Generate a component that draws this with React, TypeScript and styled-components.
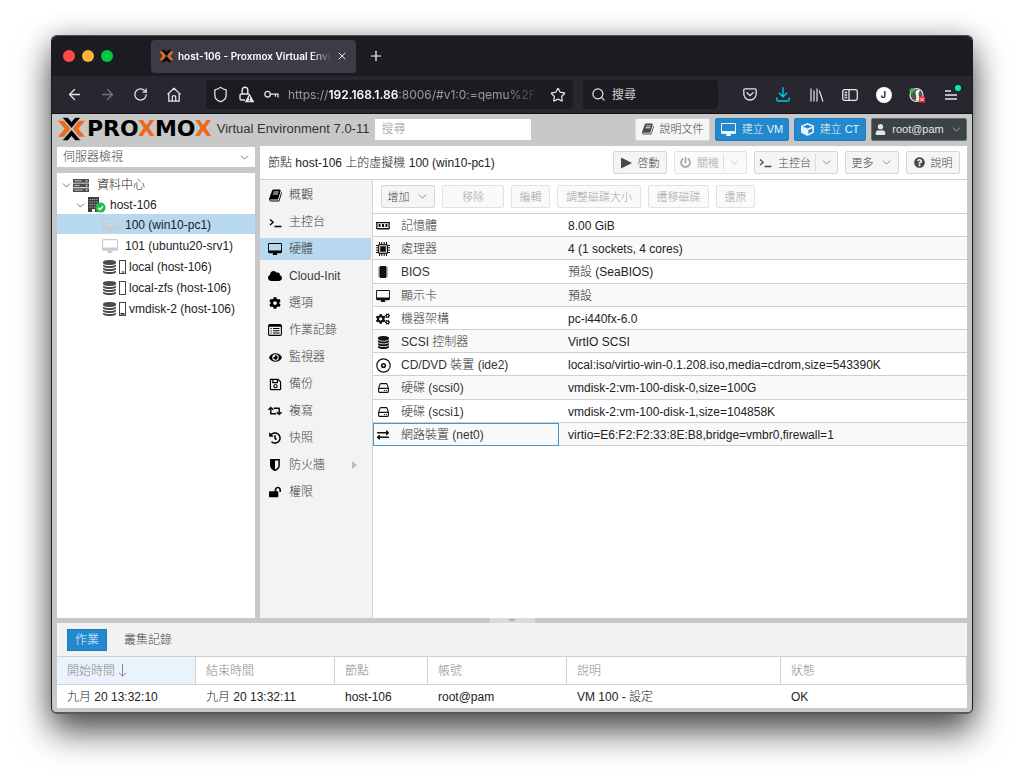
import React from 'react';
import styled, { createGlobalStyle, css } from 'styled-components';
import { ArrowLeft, ArrowRight, ChevronDown, Plus, RotateCw, Search, Shield, Star, X } from 'lucide-react';
import {
  FaCloud, FaCog, FaCogs, FaCube, FaExchangeAlt, FaEye, FaHistory, FaLockOpen,
  FaPowerOff, FaQuestionCircle, FaRegSave, FaRetweet, FaUser,
} from 'react-icons/fa';

const Global = createGlobalStyle`
  * { box-sizing: border-box; }
  body { margin: 0; background: #fff; }
  body, button, input, select {
    font-family: "Liberation Sans", "Noto Sans CJK TC", sans-serif;
    font-size: 12px;
    font-weight: 300;
    line-height: 16px;
  }
  button { margin: 0; cursor: pointer; }
  svg { display: block; flex: none; }
`;

/* ---------- drawings ---------- */

const BookIcon = ({ size = 13 }: { size?: number }) => (
  <svg width={size} height={size} viewBox="60 110 1680 1560" fill="currentColor" aria-hidden>
    <path d="M1703 478q40 57 18 129l-275 906q-19 64-76.5 107.5t-122.5 43.5h-923q-77 0-148.5-53.5t-99.5-131.5q-24-67-2-127 0-4 3-27t4-37q1-8-3-21.5t-3-19.5q2-11 8-21t16.5-23.5 16.5-23.5q23-38 45-91.5t30-91.5q3-10 .5-30t-.5-28q3-11 17-28t17-23q21-36 42-92t25-90q1-9-2.5-32t.5-28q4-13 22-30.5t22-22.5q19-26 42.5-84.5t27.5-96.5q1-8-3-25.5t-2-26.5q2-8 9-18t18-23 17-21q8-12 16.5-30.5t15-35 16-36 19.5-32 26.5-23.5 36-11.5 47.5 5.5l-1 3q38-9 51-9h761q74 0 114 56t18 130l-274 906q-36 119-71.5 153.5t-128.5 34.5h-869q-27 0-38 15-11 16-1 43 24 70 144 70h923q29 0 56-15.5t35-41.5l300-987q7-22 5-57 38 15 59 43zm-1064 2q-4 13 2 22.5t20 9.5h608q13 0 25.5-9.5t16.5-22.5l21-64q4-13-2-22.5t-20-9.5h-608q-13 0-25.5 9.5t-16.5 22.5zm-83 256q-4 13 2 22.5t20 9.5h608q13 0 25.5-9.5t16.5-22.5l21-64q4-13-2-22.5t-20-9.5h-608q-13 0-25.5 9.5t-16.5 22.5z" />
  </svg>
);

const DesktopIcon = ({ size = 14 }: { size?: number }) => (
  <svg width={size} height={Math.round(size * 0.86)} viewBox="0 0 1920 1664" fill="currentColor" aria-hidden>
    <path d="M1792 992v-832q0-13-9.5-22.5t-22.5-9.5h-1600q-13 0-22.5 9.5t-9.5 22.5v832q0 13 9.5 22.5t22.5 9.5h1600q13 0 22.5-9.5t9.5-22.5zm128-832v1088q0 66-47 113t-113 47h-544q0 37 16 77.5t32 71 16 43.5q0 26-19 45t-45 19h-512q-26 0-45-19t-19-45q0-14 16-44t32-70 16-78h-544q-66 0-113-47t-47-113v-1088q0-66 47-113t113-47h1600q66 0 113 47t47 113z" />
  </svg>
);

const databasePath =
  'M896 768q237 0 443-43t325-127v170q0 69-103 128t-280 93.5-385 34.5-385-34.5-280-93.5-103-128v-170q119 84 325 127t443 43zm0 768q237 0 443-43t325-127v170q0 69-103 128t-280 93.5-385 34.5-385-34.5-280-93.5-103-128v-170q119 84 325 127t443 43zm0-384q237 0 443-43t325-127v170q0 69-103 128t-280 93.5-385 34.5-385-34.5-280-93.5-103-128v-170q119 84 325 127t443 43zm0-1152q208 0 385 34.5t280 93.5 103 128v128q0 69-103 128t-280 93.5-385 34.5-385-34.5-280-93.5-103-128v-128q0-69 103-128t280-93.5 385-34.5z';

const DatabaseIcon = () => (
  <svg width="11" height="13" viewBox="128 0 1536 1792" fill="currentColor" aria-hidden>
    <path d={databasePath} />
  </svg>
);

const TerminalIcon = () => (
  <svg width="13" height="11" viewBox="0 0 13 11" fill="none" stroke="currentColor" strokeWidth="1.3" aria-hidden>
    <path d="M1 2.500l3.200 2.800L1 8.100M5.500 9.500h7" />
  </svg>
);

const ListIcon = () => (
  <svg width="14" height="12" viewBox="0 0 14 12" aria-hidden>
    <rect x="0.6" y="0.6" width="12.8" height="10.8" rx="1.2" fill="none" stroke="currentColor" strokeWidth="1.1" />
    <path d="M1 1h12v1.800H1zM2.500 4h1.200v1H2.500zM5 4h6.500v1H5zM2.500 6.200h1.200v1H2.500zM5 6.200h6.500v1H5zM2.500 8.400h1.200v1H2.500zM5 8.400h6.500v1H5z" fill="currentColor" />
  </svg>
);

const ShieldHalfIcon = () => (
  <svg width="10" height="12" viewBox="0 0 10 12" aria-hidden>
    <path d="M.9.8h8.200v5.700Q9.100 9.500 5 11.300.9 9.500.9 6.500z" fill="none" stroke="currentColor" strokeWidth="1.500" />
    <path d="M.5.500H5v11Q.5 9.500.5 6.500z" fill="currentColor" />
  </svg>
);

const MemoryIcon = () => (
  <svg width="14" height="9" viewBox="0 0 14 9" aria-hidden>
    <path d="M.7.7h12.6v2a1 1 0 000 1.8v2H.7v-2a1 1 0 000-1.8z" fill="none" stroke="currentColor" strokeWidth="1.2" />
    <path d="M2.6 2h2v3h-2zM6 2h2v3H6zM9.4 2h2v3h-2zM1.5 6.5h1V8h-1zM3.5 6.5h1V8h-1zM5.5 6.5h1V8h-1zM7.5 6.5h1V8h-1zM9.5 6.5h1V8h-1zM11.5 6.5h1V8h-1z" fill="currentColor" />
  </svg>
);

const CpuIcon = () => (
  <svg width="14" height="14" viewBox="0 0 14 14" aria-hidden>
    <rect x="2.6" y="2.6" width="8.8" height="8.8" rx="1" fill="none" stroke="currentColor" strokeWidth="1.2" />
    <rect x="4.2" y="4.2" width="5.6" height="5.6" fill="currentColor" />
    <path d="M3.5 0v2.400M5.8 0v2.4M8.2 0v2.4M10.5 0v2.4M5.8 11.6V14M8.2 11.6V14M10.5 11.6V14M3.5 11.6V14M0 3.5h2.4M0 5.8h2.4M0 8.2h2.4M0 10.5h2.4M11.6 3.5H14M11.6 5.8H14M11.6 8.2H14M11.6 10.5H14" stroke="currentColor" strokeWidth="1" />
  </svg>
);

const ChipIcon = () => (
  <svg width="12" height="12" viewBox="0 0 12 12" fill="currentColor" aria-hidden>
    <rect x="2.6" y="0" width="6.8" height="12" rx="1" />
    <path d="M1 1.6h10v1H1zM1 3.6h10v1H1zM1 5.6h10v1H1zM1 7.6h10v1H1zM1 9.6h10v1H1z" opacity="0.6" />
  </svg>
);

const DiscIcon = () => (
  <svg width="15" height="15" viewBox="0 0 15 15" fill="none" stroke="currentColor" aria-hidden>
    <circle cx="7.5" cy="7.5" r="6.7" strokeWidth="1.2" />
    <circle cx="7.5" cy="7.5" r="1.8" strokeWidth="1.6" />
  </svg>
);

const DiskIcon = () => (
  <svg width="11" height="10" viewBox="0 0 11 10" fill="none" stroke="currentColor" strokeWidth="1.1" aria-hidden>
    <path d="M.6 5.4L2 1.2Q2.2.6 2.8.6h5.4q.6 0 .8.6l1.4 4.2v3.2q0 .8-.8.8H1.4q-.8 0-.8-.8zM.6 5.4h9.8" />
    <path d="M6 7.5h1M8 7.5h1" />
  </svg>
);

const PlayIcon = () => (
  <svg width="11" height="12" viewBox="0 0 11 12" fill="currentColor" aria-hidden>
    <path d="M0 .6v10.8L11 6z" />
  </svg>
);

const ServerIcon = () => (
  <svg width="16" height="13" viewBox="0 0 16 13" aria-hidden>
    <path d="M0 0h16v3.7H0zM0 4.6h16v3.7H0zM0 9.3h16V13H0z" fill="#4c4c4c" />
    <path d="M1.5 1.8h7M1.5 6.4h5M1.5 11.1h8" stroke="#c9c9c9" strokeWidth="1" />
    <circle cx="13.6" cy="1.8" r="0.9" fill="#ddd" />
    <circle cx="13.6" cy="6.4" r="0.9" fill="#ddd" />
    <circle cx="13.6" cy="11.1" r="0.9" fill="#ddd" />
  </svg>
);

const NodeIcon = () => (
  <svg width="19" height="16" viewBox="0 0 19 16" aria-hidden>
    <path d="M1 0h11v15H1z" fill="#3f3f3f" />
    <path d="M2.500 2.5h8M2.500 5h8M2.500 7.5h8M2.500 10h8" stroke="#a4a4a4" strokeWidth="1.2" strokeDasharray="1.4 0.8" />
    <path d="M5 12h3v3H5z" fill="#eee" />
    <circle cx="13.6" cy="10.6" r="5" fill="#21bf4b" />
    <path d="M11.2 10.8l1.8 1.7 3-3.2" fill="none" stroke="#fff" strokeWidth="1.5" />
  </svg>
);

const StorageIcon = ({ level }: { level: 'low' | 'none' | 'mid' }) => (
  <svg width="25" height="16" viewBox="0 0 25 16" aria-hidden>
    <svg x="1" y="1" width="13" height="14" viewBox="128 0 1536 1792" preserveAspectRatio="none" fill="#4a4a4a">
      <path d={databasePath} />
    </svg>
    <rect x="17.500" y="1.500" width="6" height="13" fill="#fff" stroke="#444" />
    {level !== 'none' && (
      <path d={level === 'mid' ? 'M18.500 12.800h4' : 'M19.500 13h3'} stroke="#222" strokeWidth={level === 'mid' ? 1.6 : 1} />
    )}
  </svg>
);

const ProxmoxMark = ({ width, height, halo }: { width: number; height: number; halo: string }) => (
  <svg width={width} height={height} viewBox="0 0 27 23" fill="none" strokeLinejoin="round" aria-hidden>
    <path d="M.6 3.600h4.200q1.200 0 1.900.8l5 6q.6.900 0 1.800l-5 6q-.7.800-1.900.8H.6l6.300-7.700z" fill="#ee6a1a" />
    <path d="M26.400 3.600h-4.200q-1.200 0-1.900.8l-5 6q-.6.900 0 1.800l5 6q.7.800 1.900.8h4.200l-6.300-7.700z" fill="#ee6a1a" />
    <path d="M4.600.4h4.400q1.100 0 1.700.8l2.800 3.300 2.800-3.300q.6-.8 1.700-.8h4.400l-8.900 10.400z" fill="#000" stroke={halo} strokeWidth="0.6" />
    <path d="M4.600 22.600h4.400q1.100 0 1.700-.8l2.800-3.300 2.800 3.300q.6.800 1.700.8h4.400l-8.900-10.400z" fill="#000" stroke={halo} strokeWidth="0.6" />
  </svg>
);

const HomeIcon = () => (
  <svg width="16" height="16" viewBox="0 0 16 16" fill="none" stroke="currentColor" strokeWidth="1.3" strokeLinejoin="round" aria-hidden>
    <path d="M1.500 7.400L8 1.200l6.500 6.200M2.800 6.500v7.700h10.400V6.500M6.300 14V9.800q0-1.200 1.700-1.200t1.700 1.200V14" />
  </svg>
);

const InsecureIcon = () => (
  <svg width="17" height="17" viewBox="0 0 17 17" fill="none" stroke="currentColor" strokeWidth="1.400" aria-hidden>
    <path d="M4.200 8V4.300a2.800 3 0 015.600 0V8M7 14H3.500Q2 14 2 12.500v-3Q2 8 3.500 8h7.500" />
    <path d="M11.500 7.600l4.800 8.600H6.700z" fill="currentColor" stroke="none" />
    <path d="M11.500 10.500v2.700M11.500 14v1.200" stroke="#1c1b22" strokeWidth="1.200" />
  </svg>
);

const KeyIcon = () => (
  <svg width="15" height="9" viewBox="0 0 15 9" fill="none" stroke="currentColor" strokeWidth="1.300" aria-hidden>
    <circle cx="3.600" cy="4.200" r="2.800" />
    <path d="M6.400 4.200H14v3.300M11.400 4.200v2.600" />
  </svg>
);

const PocketIcon = () => (
  <svg width="14" height="13" viewBox="0 0 14 13" fill="none" stroke="currentColor" strokeWidth="1.300" strokeLinecap="round" aria-hidden>
    <path d="M2 .8h10q1.200 0 1.200 1.200v3.800a6.200 6.200 0 01-12.400 0V2Q.8.800 2 .8z" />
    <path d="M4 4.800l3 2.900 3-2.900" />
  </svg>
);

const DownloadIcon = () => (
  <svg width="14" height="15" viewBox="0 0 14 15" fill="none" stroke="#00c8ea" strokeWidth="1.400" strokeLinecap="round" aria-hidden>
    <path d="M7 .8v8.800M3.300 6.200L7 9.800l3.700-3.600M.8 11v1.600q0 1.400 1.400 1.400h9.600q1.400 0 1.400-1.400V11" />
  </svg>
);

const LibraryIcon = () => (
  <svg width="14" height="14" viewBox="0 0 14 14" fill="none" stroke="currentColor" strokeWidth="1.200" aria-hidden>
    <path d="M1 .5v13M4 2.500v11M7 .5v13M9.300 2.500l3.700 11" />
  </svg>
);

const SidebarIcon = () => (
  <svg width="16" height="12" viewBox="0 0 16 12" fill="none" stroke="currentColor" strokeWidth="1.300" aria-hidden>
    <rect x="0.700" y="0.700" width="14.600" height="10.600" rx="1.800" />
    <path d="M7 1v10M2.500 3.500h2.700M2.500 6h2.700M2.500 8.500h2.700" />
  </svg>
);

const ExtensionIcon = () => (
  <svg width="16" height="16" viewBox="0 0 16 16" aria-hidden>
    <circle cx="7.500" cy="8" r="6.500" fill="#555" stroke="#e8e8e8" strokeWidth="1.200" />
    <path d="M8.500 2.500q-3 2-1.500 5.500 1 2.500-.5 5.500h3.500q1-3-.5-5.500 0-3 1.500-4.500z" fill="#f4f4f4" />
    <path d="M2.800 1v5M.3 3.500h5" stroke="#1fd12f" strokeWidth="1.800" />
    <rect x="10" y="9.500" width="6" height="6" fill="#f03040" />
    <path d="M11.500 11l3 3M14.500 11l-3 3" stroke="#fff" strokeWidth="0.900" />
  </svg>
);

/* ---------- browser frame ---------- */

const Desk = styled.div`
  display: flex;
  min-height: 100vh;
  padding: 35px 51px 68px;
`;

const BrowserWindow = styled.div`
  flex: 1;
  min-width: 0;
  display: flex;
  flex-direction: column;
  overflow: hidden;
  border: 1px solid #1a1b1e;
  border-top-color: #4c4c50;
  border-bottom: 2px solid #565b59;
  border-radius: 6px;
  background: #c8c8c8;
  box-shadow: 0 18px 34px rgba(0, 0, 0, 0.66), 0 0 26px rgba(0, 0, 0, 0.2);
`;

const TitleBar = styled.div`
  display: flex;
  align-items: center;
  height: 40px;
  padding-left: 11px;
  background: #1c1b22;
  color: #fbfbfe;
`;

const Lights = styled.div`
  display: flex;
  gap: 7px;
  width: 88px;
`;

const Light = styled.span<{ $color: string }>`
  width: 12px;
  height: 12px;
  border-radius: 50%;
  background: ${p => p.$color};
`;

const BrowserTab = styled.div`
  display: flex;
  align-items: center;
  gap: 4px;
  width: 205px;
  height: 33px;
  margin-right: 12px;
  padding: 0 8px;
  border-radius: 4px;
  background: #3c3b46;
`;

const TabTitle = styled.span`
  flex: 1;
  overflow: hidden;
  white-space: nowrap;
  font: 600 10px/16px Inter, sans-serif;
  mask-image: linear-gradient(to right, #000 86%, transparent);
`;

const PlainButton = styled.button`
  display: grid;
  place-items: center;
  padding: 0;
  border: 0;
  background: none;
  color: inherit;
`;

const NavBar = styled.div`
  display: flex;
  align-items: center;
  height: 38px;
  padding: 0 5px 0 6px;
  border-bottom: 1px solid #121216;
  background: #28272f;
  color: #e6e6ea;
`;

const NavButton = styled(PlainButton)<{ $dim?: boolean }>`
  position: relative;
  flex: none;
  width: 33px;
  height: 28px;
  opacity: ${p => (p.$dim ? 0.4 : 1)};
`;

const BrowserActions = styled.div`
  display: flex;
  justify-content: space-between;
  flex: none;
  width: 234px;
`;

const AddressBar = styled.div`
  display: flex;
  align-items: center;
  gap: 9px;
  flex: 0 1 367px;
  min-width: 0;
  height: 29px;
  margin-left: 16px;
  padding: 0 7px 0 6px;
  border-radius: 4px;
  background: #1c1b22;
`;

const Url = styled.span`
  flex: 1;
  overflow: hidden;
  white-space: nowrap;
  color: #9a99a2;
  font: 400 12px/18px Inter, sans-serif;
  mask-image: linear-gradient(to right, #000 86%, transparent);

  b { color: #fbfbfe; font-weight: 600; }
`;

const BrowserSearch = styled.label`
  display: flex;
  align-items: center;
  gap: 6px;
  flex: 0 1 135px;
  height: 29px;
  margin: 0 auto 0 10px;
  padding: 0 8px;
  border-radius: 4px;
  background: #1c1b22;

  input {
    width: 100%;
    padding: 0;
    border: 0;
    outline: 0;
    background: none;
    color: #fbfbfe;
    font-weight: 500;
  }
  input::placeholder { color: #b8b8be; opacity: 1; }
`;

const Avatar = styled.span`
  display: grid;
  place-items: center;
  width: 16px;
  height: 16px;
  border-radius: 50%;
  background: #fff;
  color: #1c1b22;
  font: 700 9px/16px Inter, sans-serif;
`;

const MenuBadge = styled.span`
  position: absolute;
  top: 4px;
  right: 6px;
  width: 6px;
  height: 6px;
  border-radius: 50%;
  background: #00f0b0;
`;

/* ---------- Proxmox page ---------- */

const Page = styled.div`
  flex: 1;
  display: flex;
  flex-direction: column;
  padding: 0 5px 4px;
  background: #c8c8c8;
  color: #222;
`;

const Header = styled.header`
  display: flex;
  align-items: center;
  gap: 5px;
  height: 32px;
  padding-bottom: 2px;
`;

const Logo = styled.a`
  display: flex;
  align-items: center;
  gap: 1px;
  color: #000;
  text-decoration: none;
  font: 700 22px/24px "DejaVu Sans", sans-serif;

  em { color: #ee6a1a; font-style: normal; }
`;

const Version = styled.span`
  margin-right: 1px;
  white-space: nowrap;
  color: #333;
  font-size: 13px;
`;

const HeaderSearch = styled.input`
  width: 156px;
  height: 21px;
  margin-right: auto;
  padding: 0 6px;
  border: 0;
  background: #fff;
  &::placeholder { color: #999; opacity: 1; }
`;

type Tone = 'plain' | 'blue' | 'dark';

const tones = {
  plain: css`border-color: #d6d6d6; background: #f5f5f5; color: #4a4a4a;`,
  blue: css`border-color: #1f7cc0; background: #2389cf; color: #e9f3fa;`,
  dark: css`border-color: #607571; background: #3b4344; color: #e4e6e6;`,
};

const Button = styled.button<{ $tone?: Tone; $width: number }>`
  display: flex;
  align-items: center;
  justify-content: center;
  gap: 6px;
  flex: none;
  width: ${p => p.$width}px;
  height: 23px;
  padding: 0;
  border: 1px solid;
  border-radius: 2px;
  white-space: nowrap;
  font-size: 11px;
  ${p => tones[p.$tone ?? 'plain']}

  &:disabled { border-color: #e2e2e2; background: #fafafa; color: #a6a6a6; cursor: default; }
`;

const Caret = styled(ChevronDown).attrs({ size: 13, strokeWidth: 1.6 })`
  opacity: 0.7;
`;

const Divider = styled.span`
  width: 1px;
  height: 17px;
  margin: 0 -2px;
  background: #dcdcdc;
`;

const Workspace = styled.div`
  flex: 1;
  display: flex;
  gap: 5px;
`;

const LeftColumn = styled.aside`
  display: flex;
  flex-direction: column;
  gap: 6px;
  flex: none;
  width: 198px;
  padding-top: 1px;
`;

const ViewPicker = styled.div`
  display: grid;
  align-items: center;
  background: #fff;

  select, svg { grid-area: 1 / 1; }
  select {
    height: 20px;
    padding: 0 6px;
    border: 0;
    appearance: none;
    background: none;
    color: #444;
  }
  svg { justify-self: end; margin-right: 4px; pointer-events: none; }
`;

const Tree = styled.ul`
  flex: 1;
  margin: 0;
  padding: 1px 0;
  list-style: none;
  background: #fff;
`;

const TreeRow = styled.li<{ $indent: number; $gap: number; $tall?: boolean; $selected?: boolean }>`
  display: flex;
  align-items: center;
  height: ${p => (p.$tall ? 21 : 20)}px;
  padding: 2px 0 0 ${p => p.$indent}px;
  background: ${p => (p.$selected ? '#b7d8ee' : 'transparent')};
  white-space: nowrap;

  span { margin-left: ${p => p.$gap}px; }
`;

const VmIcon = styled.i`
  color: #c9cbcd;
`;

const Panel = styled.main`
  flex: 1;
  min-width: 0;
  display: flex;
  flex-direction: column;
  background: #fff;
`;

const PanelHeader = styled.div`
  display: flex;
  align-items: center;
  gap: 7px;
  height: 34px;
  padding: 0 7px 0 8px;
  border-bottom: 1px solid #cfcfcf;
`;

const PanelTitle = styled.h1`
  margin: 0 auto 0 0;
  white-space: nowrap;
  font-size: 12px;
  font-weight: 300;
`;

const PanelBody = styled.div`
  flex: 1;
  display: flex;
`;

const SideNav = styled.nav`
  display: flex;
  flex-direction: column;
  gap: 5px;
  flex: none;
  width: 113px;
  padding: 4px 1px 4px 0;
  border-right: 1px solid #d4d4d4;
  background: #f3f3f3;
`;

const SideLink = styled.a<{ $active?: boolean }>`
  display: flex;
  align-items: center;
  height: 22px;
  padding-left: 7px;
  background: ${p => (p.$active ? '#b7d8ee' : 'transparent')};
  color: #3c3c3c;
  text-decoration: none;
`;

const SideIcon = styled.span`
  display: grid;
  place-items: center;
  width: 16px;
  margin-right: 6px;
  color: #000;
`;

const SubArrow = styled.span`
  margin: 0 14px 0 auto;
  border: 4px solid transparent;
  border-left: 5px solid #bcbcbc;
  border-right: 0;
`;

const Content = styled.section`
  flex: 1;
  min-width: 0;
`;

const Toolbar = styled.div`
  display: flex;
  align-items: center;
  gap: 7px;
  height: 34px;
  padding: 0 8px;
  border-bottom: 1px solid #cfcfcf;
`;

const HardwareTable = styled.table`
  width: 100%;
  height: 232px;
  table-layout: fixed;
  border-collapse: separate;
  border-spacing: 0;

  col:first-child { width: 186px; }
  tr:nth-child(even) { background: #f9f9f9; }
`;

const Label = styled.th<{ $focus?: boolean }>`
  padding: 2px 0 0 2px;
  border-bottom: 1px solid #cfcfcf;
  outline: ${p => (p.$focus ? '1px solid #4a95c8' : '0')};
  outline-offset: -1px;
  color: #333;
  font-weight: 300;
  text-align: left;
`;

const LabelInner = styled.div`
  display: flex;
  align-items: center;
  gap: 10px;
`;

const RowIcon = styled.span`
  display: grid;
  place-items: center;
  width: 16px;
  height: 16px;
  color: #111;
`;

const Value = styled.td`
  padding: 2px 0 0 9px;
  border-bottom: 1px solid #cfcfcf;
  white-space: nowrap;
`;

const Splitter = styled.div`
  display: flex;
  justify-content: center;
  height: 5px;
`;

const SplitHandle = styled(PlainButton)`
  width: 45px;
  height: 5px;
  background: #dadada;

  &::after {
    content: '';
    border: 4px solid transparent;
    border-top: 3px solid #b2b2b2;
    border-bottom: 0;
  }
`;

const LogPanel = styled.section`
  background: #fff;
`;

const LogTabs = styled.div`
  display: flex;
  align-items: center;
  gap: 9px;
  height: 34px;
  padding-left: 10px;
  border-bottom: 1px solid #cfcfcf;
  background: #f2f2f2;
`;

const LogTab = styled.button<{ $active?: boolean }>`
  height: 22px;
  padding: 0 7px;
  border: 1px solid ${p => (p.$active ? '#1f7cc0' : 'transparent')};
  background: ${p => (p.$active ? '#2389cf' : 'transparent')};
  color: ${p => (p.$active ? '#e9f3fa' : '#444')};
`;

const LogTable = styled.table`
  width: 100%;
  table-layout: fixed;
  border-collapse: separate;
  border-spacing: 0;

  th, td {
    padding: 0 0 0 10px;
    text-align: left;
    font-weight: 300;
    white-space: nowrap;
  }
  th {
    height: 28px;
    border-right: 1px solid #d2d2d2;
    border-bottom: 1px solid #d2d2d2;
    color: #8a8a8a;
  }
  th[aria-sort] { background: #eaf3fb; }
  td { height: 23px; padding-top: 1px; }
`;

const SortArrow = styled.svg`
  display: inline-block;
  margin-left: 3px;
  vertical-align: -2px;
`;

/* ---------- data ---------- */

const sideItems: { label: string; icon: React.ReactNode; active?: boolean; sub?: boolean }[] = [
  { label: '概觀', icon: <BookIcon /> },
  { label: '主控台', icon: <TerminalIcon /> },
  { label: '硬體', icon: <DesktopIcon size={14} />, active: true },
  { label: 'Cloud-Init', icon: <FaCloud size={14} /> },
  { label: '選項', icon: <FaCog size={12} /> },
  { label: '作業記錄', icon: <ListIcon /> },
  { label: '監視器', icon: <FaEye size={13} /> },
  { label: '備份', icon: <FaRegSave size={13} /> },
  { label: '複寫', icon: <FaRetweet size={14} /> },
  { label: '快照', icon: <FaHistory size={12} /> },
  { label: '防火牆', icon: <ShieldHalfIcon />, sub: true },
  { label: '權限', icon: <FaLockOpen size={12} /> },
];

const hardware: { label: string; value: string; icon: React.ReactNode; focus?: boolean }[] = [
  { label: '記憶體', value: '8.00 GiB', icon: <MemoryIcon /> },
  { label: '處理器', value: '4 (1 sockets, 4 cores)', icon: <CpuIcon /> },
  { label: 'BIOS', value: '預設 (SeaBIOS)', icon: <ChipIcon /> },
  { label: '顯示卡', value: '預設', icon: <DesktopIcon /> },
  { label: '機器架構', value: 'pc-i440fx-6.0', icon: <FaCogs size={14} /> },
  { label: 'SCSI 控制器', value: 'VirtIO SCSI', icon: <DatabaseIcon /> },
  { label: 'CD/DVD 裝置 (ide2)', value: 'local:iso/virtio-win-0.1.208.iso,media=cdrom,size=543390K', icon: <DiscIcon /> },
  { label: '硬碟 (scsi0)', value: 'vmdisk-2:vm-100-disk-0,size=100G', icon: <DiskIcon /> },
  { label: '硬碟 (scsi1)', value: 'vmdisk-2:vm-100-disk-1,size=104858K', icon: <DiskIcon /> },
  { label: '網路裝置 (net0)', value: 'virtio=E6:F2:F2:33:8E:B8,bridge=vmbr0,firewall=1', icon: <FaExchangeAlt size={12} />, focus: true },
];

export default function App() {
  return (
    <Desk>
      <Global />
      <BrowserWindow>
        <TitleBar>
          <Lights>
            <Light $color="#ff4b47" />
            <Light $color="#ffb237" />
            <Light $color="#00c940" />
          </Lights>
          <BrowserTab>
            <ProxmoxMark width={15} height={14} halo="#3c3b46" />
            <TabTitle>host-106 - Proxmox Virtual Envir</TabTitle>
            <PlainButton aria-label="Close tab"><X size={12} strokeWidth={1.8} /></PlainButton>
          </BrowserTab>
          <PlainButton aria-label="New tab"><Plus size={16} strokeWidth={1.8} /></PlainButton>
        </TitleBar>

        <NavBar>
          <NavButton aria-label="Back"><ArrowLeft size={17} strokeWidth={1.8} /></NavButton>
          <NavButton aria-label="Forward" $dim><ArrowRight size={17} strokeWidth={1.8} /></NavButton>
          <NavButton aria-label="Reload"><RotateCw size={15} strokeWidth={2} /></NavButton>
          <NavButton aria-label="Home"><HomeIcon /></NavButton>
          <AddressBar>
            <Shield size={17} strokeWidth={1.8} />
            <InsecureIcon />
            <KeyIcon />
            <Url>https://<b>192.168.1.86</b>:8006/#v1:0:=qemu%2F</Url>
            <PlainButton aria-label="Bookmark"><Star size={16} strokeWidth={1.8} /></PlainButton>
          </AddressBar>
          <BrowserSearch>
            <Search size={15} strokeWidth={1.9} />
            <input aria-label="搜尋" placeholder="搜尋" />
          </BrowserSearch>
          <BrowserActions>
            <NavButton aria-label="Pocket"><PocketIcon /></NavButton>
            <NavButton aria-label="Downloads"><DownloadIcon /></NavButton>
            <NavButton aria-label="Library"><LibraryIcon /></NavButton>
            <NavButton aria-label="Sidebar"><SidebarIcon /></NavButton>
            <NavButton aria-label="Account"><Avatar>J</Avatar></NavButton>
            <NavButton aria-label="Extension"><ExtensionIcon /></NavButton>
            <NavButton aria-label="Menu">
              <svg width="12" height="10" viewBox="0 0 12 10" stroke="currentColor" strokeWidth="1.300" aria-hidden>
                <path d="M0 1h6M0 5h12M0 9h12" />
              </svg>
              <MenuBadge />
            </NavButton>
          </BrowserActions>
        </NavBar>

        <Page>
          <Header>
            <Logo href="#home">
              <ProxmoxMark width={29} height={24} halo="#c8c8c8" />
              <span>PRO<em>X</em>MO<em>X</em></span>
            </Logo>
            <Version>Virtual Environment 7.0-11</Version>
            <HeaderSearch aria-label="搜尋" placeholder="搜尋" />
            <Button $width={75}><BookIcon size={12} />說明文件</Button>
            <Button $width={74} $tone="blue"><DesktopIcon size={15} />建立 VM</Button>
            <Button $width={72} $tone="blue"><FaCube size={13} />建立 CT</Button>
            <Button $width={96} $tone="dark"><FaUser size={11} />root@pam<Caret /></Button>
          </Header>

          <Workspace>
            <LeftColumn>
              <ViewPicker>
                <select aria-label="檢視" defaultValue="server">
                  <option value="server">伺服器檢視</option>
                </select>
                <Caret />
              </ViewPicker>
              <Tree>
                <TreeRow $indent={3} $gap={8}><Caret /><ServerIcon /><span>資料中心</span></TreeRow>
                <TreeRow $indent={17} $gap={4}><Caret /><NodeIcon /><span>host-106</span></TreeRow>
                <TreeRow $indent={45} $gap={7} $selected><VmIcon><DesktopIcon size={16} /></VmIcon><span>100 (win10-pc1)</span></TreeRow>
                <TreeRow $indent={45} $gap={7} $tall><VmIcon><DesktopIcon size={16} /></VmIcon><span>101 (ubuntu20-srv1)</span></TreeRow>
                <TreeRow $indent={45} $gap={2} $tall><StorageIcon level="low" /><span>local (host-106)</span></TreeRow>
                <TreeRow $indent={45} $gap={2} $tall><StorageIcon level="none" /><span>local-zfs (host-106)</span></TreeRow>
                <TreeRow $indent={45} $gap={2} $tall><StorageIcon level="mid" /><span>vmdisk-2 (host-106)</span></TreeRow>
              </Tree>
            </LeftColumn>

            <Panel>
              <PanelHeader>
                <PanelTitle>節點 host-106 上的虛擬機 100 (win10-pc1)</PanelTitle>
                <Button $width={54}><PlayIcon />啓動</Button>
                <Button $width={73} disabled><FaPowerOff size={11} />關機<Divider /><Caret /></Button>
                <Button $width={84}><TerminalIcon />主控台<Divider /><Caret /></Button>
                <Button $width={54}>更多<Caret /></Button>
                <Button $width={54}><FaQuestionCircle size={11} />說明</Button>
              </PanelHeader>

              <PanelBody>
                <SideNav>
                  {sideItems.map(item => (
                    <SideLink key={item.label} href="#hardware" $active={item.active}>
                      <SideIcon>{item.icon}</SideIcon>
                      {item.label}
                      {item.sub && <SubArrow />}
                    </SideLink>
                  ))}
                </SideNav>

                <Content>
                  <Toolbar>
                    <Button $width={54}>增加<Caret /></Button>
                    <Button $width={62} disabled>移除</Button>
                    <Button $width={39} disabled>編輯</Button>
                    <Button $width={84} disabled>調整磁碟大小</Button>
                    <Button $width={61} disabled>遷移磁碟</Button>
                    <Button $width={39} disabled>還原</Button>
                  </Toolbar>
                  <HardwareTable>
                    <colgroup><col /><col /></colgroup>
                    <tbody>
                      {hardware.map(row => (
                        <tr key={row.label}>
                          <Label scope="row" $focus={row.focus}>
                            <LabelInner><RowIcon>{row.icon}</RowIcon>{row.label}</LabelInner>
                          </Label>
                          <Value>{row.value}</Value>
                        </tr>
                      ))}
                    </tbody>
                  </HardwareTable>
                </Content>
              </PanelBody>
            </Panel>
          </Workspace>

          <Splitter><SplitHandle aria-label="Collapse log" /></Splitter>

          <LogPanel>
            <LogTabs>
              <LogTab $active>作業</LogTab>
              <LogTab>叢集記錄</LogTab>
            </LogTabs>
            <LogTable>
              <colgroup>
                <col width="139" /><col width="139" /><col width="93" />
                <col width="139" /><col width="214" /><col />
              </colgroup>
              <thead>
                <tr>
                  <th aria-sort="descending">
                    開始時間
                    <SortArrow width="9" height="13" viewBox="0 0 9 13" fill="none" stroke="currentColor" aria-hidden>
                      <path d="M4.500 0v12M.8 8.500l3.700 3.700 3.700-3.700" />
                    </SortArrow>
                  </th>
                  <th>結束時間</th>
                  <th>節點</th>
                  <th>帳號</th>
                  <th>說明</th>
                  <th>狀態</th>
                </tr>
              </thead>
              <tbody>
                <tr>
                  <td>九月 20 13:32:10</td>
                  <td>九月 20 13:32:11</td>
                  <td>host-106</td>
                  <td>root@pam</td>
                  <td>VM 100 - 設定</td>
                  <td>OK</td>
                </tr>
              </tbody>
            </LogTable>
          </LogPanel>
        </Page>
      </BrowserWindow>
    </Desk>
  );
}
